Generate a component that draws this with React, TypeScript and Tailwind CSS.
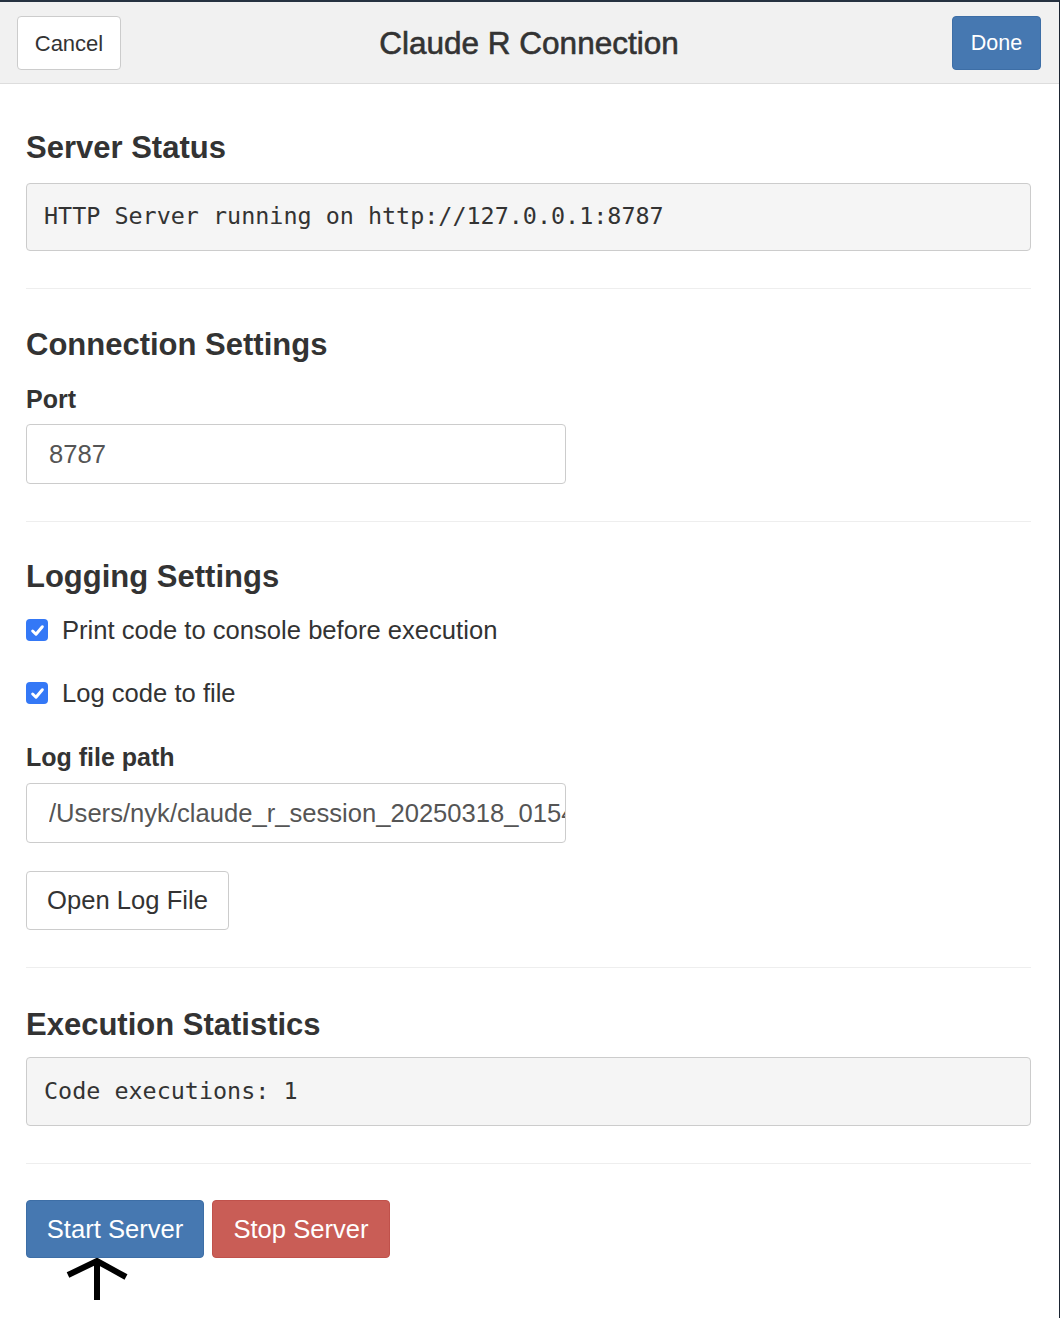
import React from "react";

const sans = { fontFamily: '"Liberation Sans", Arial, sans-serif' };

function Check() {
  return (
    <span className="flex h-[22px] w-[22px] shrink-0 items-center justify-center rounded-[4px] bg-[#3478f6]">
      <svg width="15" height="15" viewBox="0 0 14 14" fill="none">
        <path d="M2.5 7.5 L5.6 10.5 L11.5 3.5" stroke="#fff" strokeWidth="2.8" strokeLinecap="round" strokeLinejoin="round" />
      </svg>
    </span>
  );
}

function Heading({ children }: { children: React.ReactNode }) {
  return <h4 className="text-[31px] font-bold leading-[34px] text-[#333]">{children}</h4>;
}

function Divider() {
  return <div className="h-px bg-[#eeeeee]" />;
}

export default function App() {
  return (
    <div
      className="flex min-h-[1318px] w-[1060px] flex-col border-t-2 border-r border-t-[#263241] border-r-[#1b2431] bg-white text-[#333]"
      style={sans}
    >
      {/* Header */}
      <div className="grid h-[82px] grid-cols-[1fr_auto_1fr] items-center border-b border-[#dddddd] bg-[#f1f1f1] pl-[17px] pr-[18px]">
        <div className="flex">
          <button className="h-[54px] w-[104px] rounded-[4px] border border-[#cccccc] bg-white pt-[2px] text-[22px] text-[#333]">
            Cancel
          </button>
        </div>
        <div className="pt-[2px] text-[31.5px] leading-none text-[#333] [-webkit-text-stroke:0.6px_#333]">Claude R Connection</div>
        <div className="flex justify-end">
          <button className="h-[54px] w-[89px] rounded-[4px] border border-[#3d6ea6] bg-[#4678b1] pt-[2px] text-[21.5px] text-white">
            Done
          </button>
        </div>
      </div>

      {/* Content */}
      <div className="flex flex-col pl-[26px] pr-[28px]">
        <div className="mt-[47px]">
          <Heading>Server Status</Heading>
        </div>
        <div
          className="mt-[18px] flex h-[68px] items-center rounded-[4px] border border-[#cccccc] bg-[#f5f5f5] pl-[17px] text-[23.4px] text-[#333]"
          style={{ fontFamily: '"DejaVu Sans Mono", monospace' }}
        >
          HTTP Server running on http://127.0.0.1:8787
        </div>
        <div className="mt-[37px]">
          <Divider />
        </div>

        <div className="mt-[39px]">
          <Heading>Connection Settings</Heading>
        </div>
        <label className="mt-[19px] block text-[25px] font-bold leading-[36px]">Port</label>
        <input
          readOnly
          value="8787"
          className="mt-[7px] h-[60px] w-[540px] rounded-[4px] border border-[#cccccc] bg-white pl-[22px] text-[25.6px] text-[#555] outline-none"
          style={sans}
        />
        <div className="mt-[37px]">
          <Divider />
        </div>

        <div className="mt-[38px]">
          <Heading>Logging Settings</Heading>
        </div>
        <div className="mt-[18px] flex h-[36px] items-center gap-[14px] text-[25.6px]">
          <Check />
          <span>Print code to console before execution</span>
        </div>
        <div className="mt-[27px] flex h-[36px] items-center gap-[14px] text-[25.6px]">
          <Check />
          <span>Log code to file</span>
        </div>
        <label className="mt-[28px] block text-[25px] font-bold leading-[36px]">Log file path</label>
        <input
          readOnly
          value="/Users/nyk/claude_r_session_20250318_015423.R"
          className="mt-[8px] h-[60px] w-[540px] rounded-[4px] border border-[#cccccc] bg-white pl-[22px] text-[25.6px] text-[#555] outline-none"
          style={sans}
        />
        <div className="mt-[28px]">
          <button className="h-[59px] w-[203px] rounded-[4px] border border-[#cccccc] bg-white text-[25.6px] text-[#333]">
            Open Log File
          </button>
        </div>
        <div className="mt-[37px]">
          <Divider />
        </div>

        <div className="mt-[40px]">
          <Heading>Execution Statistics</Heading>
        </div>
        <div
          className="mt-[15px] flex h-[69px] items-center rounded-[4px] border border-[#cccccc] bg-[#f5f5f5] pl-[17px] text-[23.4px] text-[#333]"
          style={{ fontFamily: '"DejaVu Sans Mono", monospace' }}
        >
          Code executions: 1
        </div>
        <div className="mt-[37px]">
          <Divider />
        </div>

        <div className="mt-[36px] flex gap-[8px]">
          <button className="h-[58px] w-[178px] rounded-[4px] border border-[#3d6ea6] bg-[#4678b1] text-[25.6px] text-white">
            Start Server
          </button>
          <button className="h-[58px] w-[178px] rounded-[4px] border border-[#c0514b] bg-[#c95d56] text-[25.6px] text-white">
            Stop Server
          </button>
        </div>
        <div className="ml-[34px]">
          <svg width="72" height="46" viewBox="0 0 72 46" fill="none">
            <path d="M37 2 L37 42" stroke="#000" strokeWidth="6" />
            <path d="M8 17 L37 3 L66 19" stroke="#000" strokeWidth="6" strokeLinejoin="miter" />
          </svg>
        </div>
      </div>
    </div>
  );
}
